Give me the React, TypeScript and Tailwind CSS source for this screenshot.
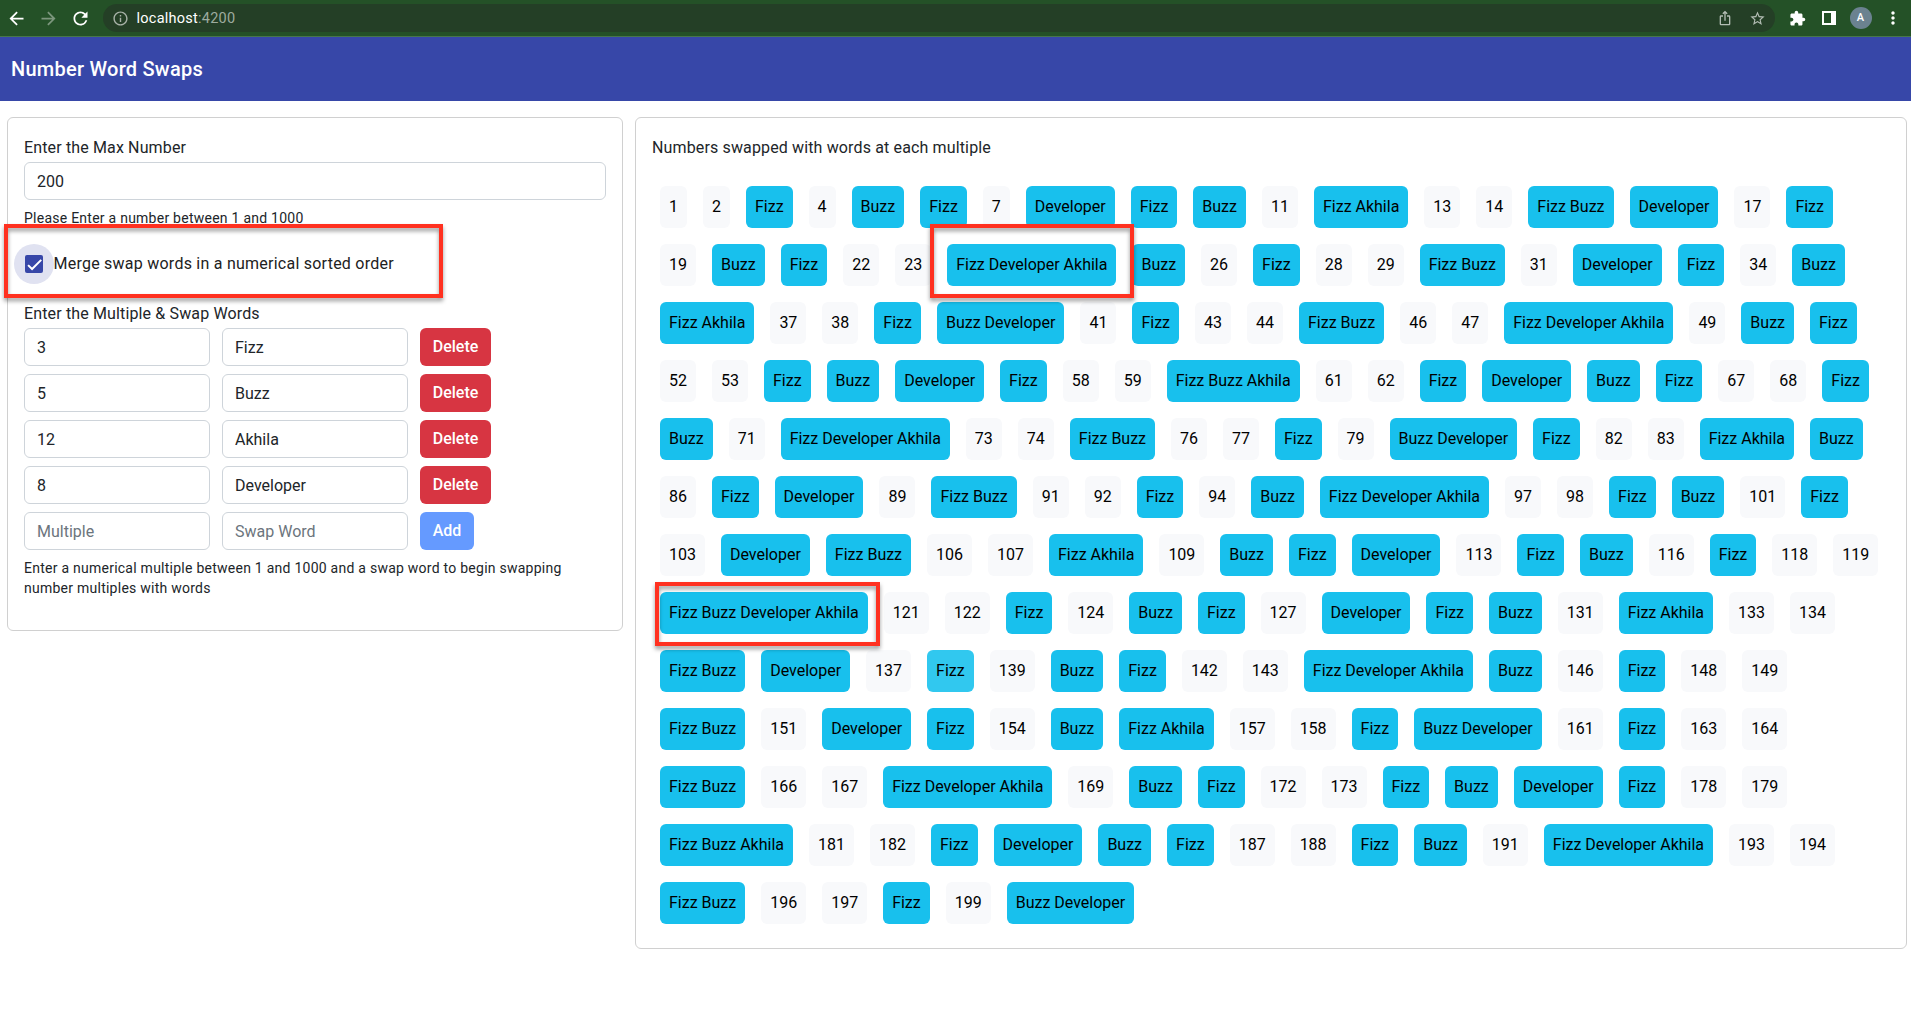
import { MdArrowBack, MdArrowForward, MdRefresh, MdInfoOutline, MdStarBorder, MdExtension, MdMoreVert, MdIosShare } from "react-icons/md";

const swaps = [
  { multiple: 3, word: "Fizz" },
  { multiple: 5, word: "Buzz" },
  { multiple: 12, word: "Akhila" },
  { multiple: 8, word: "Developer" },
];

const sortedSwaps = [...swaps].sort((a, b) => a.multiple - b.multiple);

function label(n: number) {
  return sortedSwaps.filter((s) => n % s.multiple === 0).map((s) => s.word).join(" ");
}

function BrowserBar() {
  return (
    <div className="flex h-[37px] items-center border-b border-[#47764a] bg-[#245127] text-white">
      <MdArrowBack className="ml-[6px] size-[21px]" />
      <MdArrowForward className="ml-[11px] size-[21px] text-[#7c967d]" />
      <MdRefresh className="ml-[11px] size-[21px]" />
      <div className="ml-3 flex h-7 flex-1 items-center rounded-full bg-[#243f26] text-[#b3bdb4]">
        <MdInfoOutline className="ml-[9px] size-[17px] text-[#a8b2a8]" />
        <div className="ml-[7.5px] pt-px text-[14.5px] tracking-[0.25px] text-[#9dab9e]">
          <span className="text-white">localhost</span>:4200
        </div>
        <MdIosShare className="ml-auto size-4" />
        <MdStarBorder className="ml-[15.5px] mr-[9.5px] size-[17px]" />
      </div>
      <MdExtension className="ml-[13.5px] size-[17px]" />
      <div className="ml-4 h-[14px] w-[14px] border-2 border-r-[5px] border-white" />
      <div className="ml-[14px] flex size-[22px] items-center justify-center rounded-full bg-[#6b8290] text-[11px] font-medium">A</div>
      <MdMoreVert className="ml-[11.5px] mr-2 size-5" />
    </div>
  );
}

const field = "h-[38px] rounded-md border border-[#ced4da] bg-white px-3 text-base tracking-normal text-[#212529] placeholder:text-[#6c757d] outline-none";

function SettingsCard() {
  return (
    <section className="h-[514px] w-[616px] rounded-md border border-[#d0d0d0] px-4 pt-[18px]">
      <div className="leading-6 tracking-[0.14px]">Enter the Max Number</div>
      <input className={`${field} mt-[2px] block w-full`} defaultValue="200" />
      <div className="mt-2 text-sm leading-5">Please Enter a number between 1 and 1000</div>
      <div className="-ml-[10px] mt-[16px] flex h-10 items-center">
        <span className="flex size-10 items-center justify-center rounded-full bg-[#e0e2f1]">
          <span className="flex size-[18px] items-center justify-center rounded-xs bg-[#3747a8]">
            <svg viewBox="0 0 24 24" className="size-[15px]" fill="none" stroke="white" strokeWidth="3.12">
              <path d="M1.73 12.91 8.1 19.28 22.79 4.59" />
            </svg>
          </span>
        </span>
        <span className="-ml-[0.5px] tracking-[0.24px] text-[#212121]">Merge swap words in a numerical sorted order</span>
      </div>
      <div className="mt-[18px] leading-6 tracking-[0.14px]">Enter the Multiple &amp; Swap Words</div>
      <div className="mt-[2px] flex flex-col gap-2">
        {swaps.map((s) => (
          <div key={s.multiple} className="flex gap-3">
            <input className={`${field} w-[186px]`} defaultValue={s.multiple} />
            <input className={`${field} w-[186px]`} defaultValue={s.word} />
            <button className="h-[38px] w-[71px] rounded-md bg-[#d73542] font-medium tracking-normal text-white">Delete</button>
          </div>
        ))}
        <div className="flex gap-3">
          <input className={`${field} w-[186px]`} placeholder="Multiple" />
          <input className={`${field} w-[186px]`} placeholder="Swap Word" />
          <button className="h-[38px] w-[54px] rounded-md bg-[#659aff] font-medium tracking-normal text-white">Add</button>
        </div>
      </div>
      <div className="mt-2 text-sm leading-5">
        Enter a numerical multiple between 1 and 1000 and a swap word to begin swapping number multiples with words
      </div>
    </section>
  );
}

function ResultsCard() {
  return (
    <section className="h-[832px] w-[1272px] rounded-md border border-[#d0d0d0] px-4 pt-[18px]">
      <div className="leading-6 tracking-[0.14px]">Numbers swapped with words at each multiple</div>
      <div className="mt-[18px] flex flex-wrap tracking-normal text-black">
        {Array.from({ length: 200 }, (_, i) => i + 1).map((n) => {
          const word = label(n);
          const tone = !word ? "bg-[#f8f9fb]" : n === 138 ? "bg-[#31c8ef]" : "bg-[#18c0ed]";
          return (
            <button key={n} className={`m-2 h-[42px] rounded-md px-[9px] tracking-[-0.005px] ${tone}`}>
              {word || n}
            </button>
          );
        })}
      </div>
    </section>
  );
}

const callout = "pointer-events-none absolute border-4 border-[#ff3120] [filter:drop-shadow(0_3px_2px_rgba(0,0,0,0.4))]";

export default function App() {
  return (
    <div className="relative h-[1011px] w-[1911px] overflow-hidden bg-white font-[Roboto,'Liberation_Sans',sans-serif] text-base tracking-[0.25px] text-[#212529]">
      <BrowserBar />
      <header className="flex h-16 items-center bg-[#3747a8] px-[11px] text-xl font-medium text-white">Number Word Swaps</header>
      <main className="flex items-start gap-3 pl-[7px] pt-4">
        <SettingsCard />
        <ResultsCard />
      </main>
      <div className={`${callout} left-[4px] top-[224px] h-[74px] w-[439px]`} />
      <div className={`${callout} left-[930px] top-[224px] h-[74px] w-[204px]`} />
      <div className={`${callout} left-[655px] top-[582px] h-[64px] w-[225px]`} />
    </div>
  );
}
